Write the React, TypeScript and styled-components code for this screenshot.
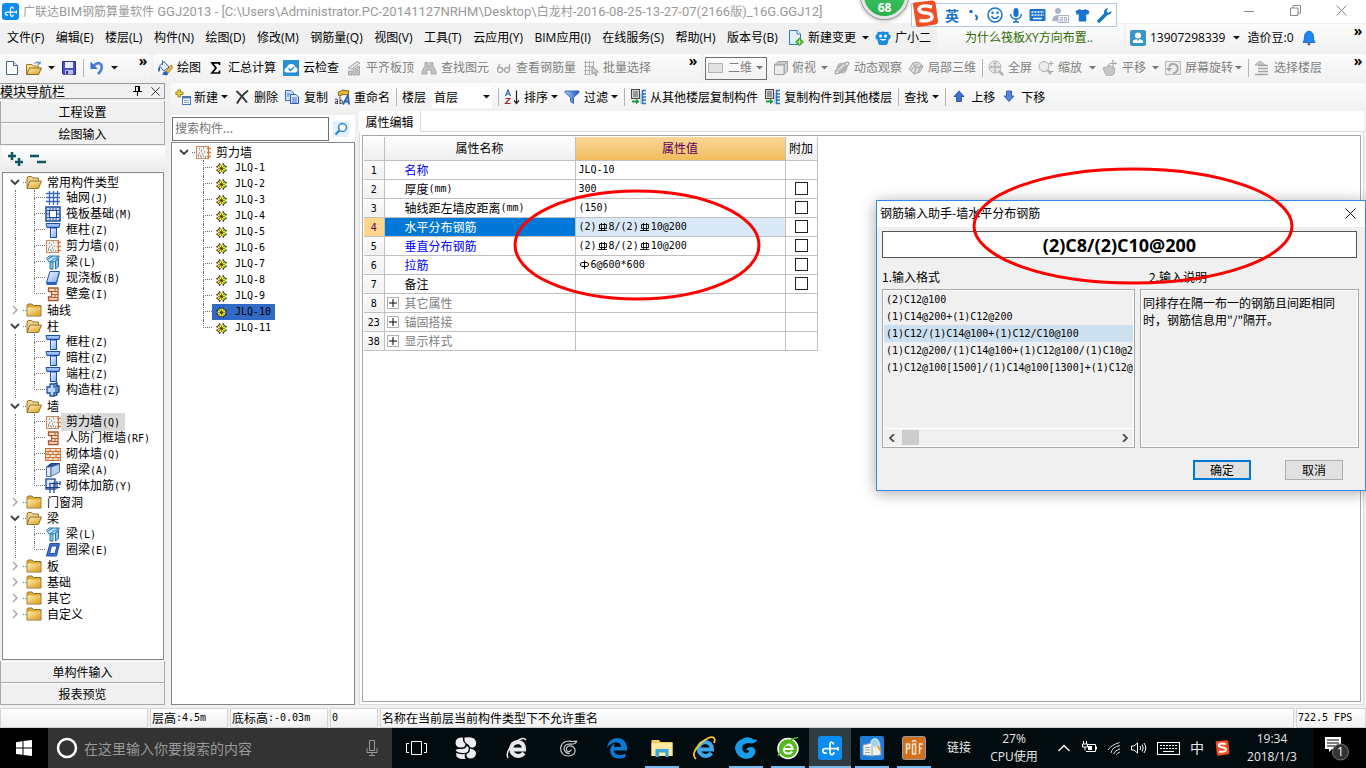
import React from 'react';
import styled, { createGlobalStyle, css } from 'styled-components';

const UI = '"Open Sans", "Noto Sans CJK SC", sans-serif';
const CJK = '"Noto Sans CJK SC", sans-serif';
const MONO = '"DejaVu Sans Mono", monospace';

const Global = createGlobalStyle`
  *, *::before, *::after { box-sizing: border-box; }
  html, body { margin: 0; padding: 0; background: #f0f0f0; }
  body { font: 12px/16px ${UI}; color: #000; }
  button, input, select { font: inherit; color: inherit; margin: 0; padding: 0; border: 0; background: none; border-radius: 0; }
  ul { list-style: none; margin: 0; padding: 0; }
`;

/* ---------- icons ---------- */

const folderClosed = (
  <>
    <path d="M1 4 Q1 2 2.500 2 H6 L7.500 3.500 H15 V14 H1z" fill="#e0a828" stroke="#8a7440" />
    <path d="M1.500 5.500 H14.500 V13.500 H1.500z" fill="url(#gFolder)" />
  </>
);
const column = (
  <>
    <path d="M1 1.500 H15 L14 5.500 H2z" fill="#6fa0e8" stroke="#1c4fa8" />
    <path d="M2 3 H14" stroke="#cfe2ff" />
    <rect x="5.500" y="6" width="6" height="9.500" fill="url(#gBlue)" stroke="#1c4fa8" />
  </>
);
const wall = (
  <>
    <rect x="1.500" y="2.500" width="12" height="12" fill="#f1eeec" stroke="#c98a64" />
    <path d="M13.500 2V15" stroke="#c9713c" />
    <path d="M12 4.500 H16 M12 8.500 H16 M12 12.500 H16" stroke="#d77a36" strokeWidth="1.300" />
    <path d="M4 5h1M8 4h1M6 7h1M9 8h1M4 9h1M7 10h1M3 12h1M5 12h1M8 12h1M10 13h1M6 13h1M3 11h1" stroke="#666" />
  </>
);
const copyLevel = (
  <>
    <rect x="1.500" y=".5" width="8" height="9" fill="#d8d8d8" stroke="#444" />
    <path d="M3 3h5M3 5h5M3 7h5" stroke="#555" />
    <path d="M16 1.500H12.500V14.500H16M12.500 5H16M12.500 8H16M12.500 11H16" stroke="#2a6fc4" fill="none" strokeWidth="1.500" />
    <path d="M11 4V15" stroke="#8ab8ec" />
    <path d="M2 11.500 H6 V9.500 L9.500 12.500 L6 15.500 V13.500 H2z" fill="#1e9a3a" />
  </>
);

const icons: Record<string, React.ReactNode> = {
  app: (
    <>
      <rect width="16" height="16" rx="3" fill="#0a8cf0" />
      <path d="M10.500 5Q10 3.500 9 4Q8 4.300 8 5.500V10.500Q8 12.800 9.500 12.500Q10.500 12.300 10.500 11.300M13.500 7.500V9.500M13.500 8.500H5Q3 8.500 3 10Q3.200 11.600 5.200 11.500" stroke="#fff" strokeWidth="1.200" fill="none" strokeLinecap="round" />
    </>
  ),
  newDoc: (
    <>
      <path d="M2.500 1.500 H9.500 L13.500 5.500 V14.500 H2.500z" fill="#fff" stroke="#4c6484" />
      <path d="M9.500 1.500 V5.500 H13.500" fill="#dce6f4" stroke="#4c6484" />
    </>
  ),
  open: (
    <>
      <path d="M.5 14 V4.500 H6 L7.500 6 H12.500 V8" fill="#f7dc8a" stroke="#9a7a30" />
      <path d="M.5 14.500 L3.500 8 H15.500 L12.500 14.500z" fill="url(#gFolder)" stroke="#8f6c20" />
      <path d="M8.500 3.500 Q11 .5 13.500 3 M14 1 V4 H11" stroke="#476fae" fill="none" />
    </>
  ),
  folderOpen: (
    <>
      <path d="M1 14 V4 Q1 2.500 2.500 2.500 H5.500 L7 4 H12.500 V7" fill="#f3d27c" stroke="#8a7440" />
      <path d="M1 14.500 L4 7 H15.500 L12.500 14.500z" fill="url(#gFolder)" stroke="#8a7440" />
    </>
  ),
  folder: folderClosed,
  save: (
    <>
      <path d="M1.500 1.500 H14.500 V14.500 H2.500 L1.500 13.500z" fill="#4a50c0" stroke="#2b2f8c" />
      <rect x="4" y="2" width="8" height="6" fill="#e8ecfa" />
      <rect x="4" y="10" width="8" height="4.500" fill="#b8bfe6" />
      <rect x="5" y="11" width="2" height="3" fill="#2b2f8c" />
    </>
  ),
  undo: (
    <>
      <path d="M5 5.500 Q9 1.500 12 4.500 Q14.500 8.500 9 14" stroke="#4a80dc" strokeWidth="2.600" fill="none" />
      <path d="M1.500 1.500 V9 H9z" fill="#3a72d0" />
    </>
  ),
  paint: (
    <>
      <path d="M2.500 6 L7 1.500 L12 7 L7 11z" fill="#eaf1fa" stroke="#35618f" />
      <path d="M5.500 .5 V5" stroke="#35618f" />
      <path d="M2 6.500 Q0 10 2 12 Q4 10 2.800 7" fill="#2f5f9c" />
      <path d="M9 11.500 L14 5 L16 7 L11.500 13z" fill="#e7b73e" stroke="#8c6a1c" strokeWidth=".6" />
      <path d="M5 14.500 Q7 10.500 9.500 11.500 Q12.500 14 9.500 15.500z" fill="#2b62b8" />
    </>
  ),
  sigma: <path d="M11.500 5 V2.800 H4 L8 8 L4 13 H11.500 V10.500" fill="none" stroke="#000" strokeWidth="1.700" />,
  cloud: (
    <>
      <rect width="16" height="16" fill="#2a90d4" />
      <path d="M4 12.500 Q1 12.500 1.500 9.500 Q2 7.500 4 7.500 Q5 3.500 8.500 4 Q11.500 4 12 7 Q15 7.500 14.500 10.500 Q14 12.500 12 12.500z" fill="#fff" />
      <path d="M5.500 8.500 L7.500 10.500 L11 7" stroke="#2088d0" strokeWidth="1.500" fill="none" />
    </>
  ),
  slabTop: (
    <>
      <path d="M2 8 L11 1.500 L14 3 L6 9z" fill="#e0e0e0" stroke="#a8a8a8" />
      <path d="M2.500 15 V11 H6 V15z M7 15 V9.500 L10 8 V15z M11 15 V7 L13.500 6 V15z" fill="#c8c8c8" stroke="#a8a8a8" />
    </>
  ),
  binoculars: (
    <path d="M4 2.500 h3 v4 h2 v-4 h3 v3.500 l3 5 v3 h-5 v-4 h-4 v4 h-5 v-3 l3-5z" fill="#c4c4c4" stroke="#9c9c9c" strokeWidth=".8" />
  ),
  glasses: (
    <g fill="none" stroke="#aaa" strokeWidth="1.300">
      <circle cx="4" cy="10" r="2.500" />
      <circle cx="11" cy="10" r="2.500" />
      <path d="M6.500 9.500 H8.500 M1.500 9 L4 4 M13.500 10 V4" />
    </g>
  ),
  batch: (
    <>
      <path d="M1 2.500H11M1 6.500H11M1 10.500H8M1 14.500H8M2.500 1V15M6.500 1V15M10.500 1V8" stroke="#b0b0b0" />
      <path d="M9 6 L15.500 12 H12.500 L14 15 L12.500 15.500 L11 12.500 L9 14z" fill="#d4d4d4" stroke="#999" />
    </>
  ),
  rect2d: <rect x=".5" y="3.500" width="14" height="9" fill="#e2e2e2" stroke="#b4b4b4" />,
  cube: (
    <>
      <path d="M1.500 5 L5 1.500 H14.500 L11 5z" fill="#ccc" stroke="#a0a0a0" />
      <path d="M11 5 L14.500 1.500 V11 L11 14.500z" fill="#d4d4d4" stroke="#a0a0a0" />
      <path d="M1.500 5 H11 V14.500 H1.500z" fill="#ececec" stroke="#a0a0a0" />
    </>
  ),
  planet: (
    <>
      <circle cx="8" cy="8" r="5.500" fill="#bcbcbc" />
      <ellipse cx="8" cy="8" rx="8.500" ry="2.500" transform="rotate(-40 8 8)" fill="none" stroke="#a6a6a6" strokeWidth="1.300" />
      <path d="M4 10 L10 4.500" stroke="#e8e8e8" strokeWidth="1.200" />
    </>
  ),
  local3d: (
    <>
      <path d="M1 9 L5 3 L10 2 L15 6 L12 12 L6 14z" fill="#dcdcdc" stroke="#a6a6a6" />
      <path d="M5 3 L8 8 L6 14 M8 8 L15 6 M3 10 L10 4 M10 13 L13 5" stroke="#a6a6a6" fill="none" />
    </>
  ),
  zoomAll: (
    <>
      <circle cx="7" cy="7" r="6" fill="#ececec" stroke="#adadad" />
      <path d="M7 2.500 V11.500 M2.500 7 H11.500 M5.500 4 L7 2.500 L8.500 4 M5.500 10 L7 11.500 L8.500 10 M4 5.500 L2.500 7 L4 8.500 M10 5.500 L11.500 7 L10 8.500" stroke="#a0a0a0" fill="none" />
      <path d="M11 11 L15 15" stroke="#b0b0b0" strokeWidth="2.500" />
    </>
  ),
  zoomIn: (
    <>
      <circle cx="6" cy="6.500" r="5" fill="#ececec" stroke="#adadad" />
      <path d="M9.500 10 L13 14" stroke="#b0b0b0" strokeWidth="2.500" />
      <path d="M13 1 V6 M10.500 3.500 H15.500 M11 11.500 H15.500" stroke="#a8a8a8" />
    </>
  ),
  pan: (
    <>
      <path d="M1 8 Q3 6 5 8 L6 5 Q8 4 9 7 Q12 6 13 9 L12 14 L9 16 H5 L3 13z" fill="#c6c6c6" stroke="#b0b0b0" />
      <path d="M11 0 V8 M7.500 3.500 H14.500 M10 1.500 L11 .5 L12 1.500 M13.500 2.500 L14.500 3.500 L13.500 4.500" stroke="#a0a0a0" fill="none" />
    </>
  ),
  rotate: (
    <>
      <rect x=".5" y="1.500" width="15" height="13" fill="#ececec" stroke="#bbb" />
      <path d="M4 7 A4.500 4.500 0 1 1 8 13" fill="none" stroke="#a4a4a4" strokeWidth="1.800" />
      <path d="M1 8 L4 11.500 L7 8z" fill="#a4a4a4" />
    </>
  ),
  floors: (
    <>
      <path d="M1 5 L6 1 L11 5z" fill="#ccc" stroke="#aaa" />
      <path d="M4 5.500H14M4 8.500H14M4 11.500H14M1 14.500H14" stroke="#a4a4a4" strokeWidth="1.500" />
    </>
  ),
  newComp: (
    <>
      <rect x="7.500" y="7.500" width="8" height="8" fill="#fff" stroke="#4a76c0" />
      <path d="M7 8.500H16" stroke="#4a76c0" strokeWidth="2" />
      <path d="M9 11.500h5M9 13.500h5" stroke="#7b9bd0" />
      <path d="M3 .8 H5.500 V3 H8 V5.500 H5.500 V8 H3 V5.500 H.8 V3 H3z" fill="#f2cf2f" stroke="#8b7418" strokeWidth=".8" />
    </>
  ),
  del: <path d="M2.500 2 Q8 7 13 13.500 M14 1.500 Q7 7 3 14.500" stroke="#3c3c3c" strokeWidth="2" fill="none" />,
  copy: (
    <>
      <path d="M1.500 1.500 H7 L9.500 4 V11.500 H1.500z" fill="#cfe0fa" stroke="#3e6cb8" />
      <path d="M6.500 5.500 H12 L14.500 8 V14.500 H6.500z" fill="#dbe8fc" stroke="#2c5aa8" />
      <path d="M8 9h5M8 11h5M8 13h5M3 5h3M3 7h2" stroke="#3e6cb8" />
    </>
  ),
  rename: (
    <>
      <path d="M4 3.500 L9 1 L15 2 L14 6 L9 5.500 L5 7z" fill="#e6b93c" stroke="#7b6320" />
      <path d="M9 15.500 L14 6.500 L15 15.500 M11 12.500H15" stroke="#2660c0" strokeWidth="1.800" fill="none" />
      <path d="M1 10.500 Q3.500 9 3.500 11.500 V15 M3.500 12.500 Q.5 12 1 14 Q2 15.500 3.500 14 M6 7.500V15 M6 11.500 Q8.500 10 8.500 13 Q8 15.500 6 14.500" stroke="#444" fill="none" />
    </>
  ),
  sort: (
    <>
      <path d="M1.500 7 L4 .8 L6.500 7 M2.500 5H5.500" stroke="#2f5fb8" strokeWidth="1.200" fill="none" />
      <path d="M1.500 9.500H6L1.500 14.500H6.500" stroke="#a02c2c" strokeWidth="1.200" fill="none" />
      <path d="M12.500 1.500V13.500M10 11.500L12.500 14.500L15 11.500" stroke="#222" strokeWidth="1.200" fill="none" />
    </>
  ),
  filter: <path d="M1 2 H15 V3.500 L9.500 8.500 V14.500 L6.500 12.500 V8.500 L1 3.500z" fill="url(#gBlueDeep)" stroke="#2456b0" strokeWidth=".8" />,
  copyLevel,
  up: <path d="M8 2 L13 7.500 H10.500 V12.500 H5.500 V7.500 H3z" fill="#3c72d8" stroke="#1d3f90" strokeWidth=".8" />,
  down: <path d="M8 12.500 L13 7 H10.500 V2 H5.500 V7 H3z" fill="#5484e0" stroke="#274ea4" strokeWidth=".8" />,
  change: (
    <>
      <path d="M1.500 .5 H9 L12.500 4 V14.500 H1.500z" fill="#dff0fc" stroke="#2b7cb8" />
      <path d="M9 .5V4H12.500" fill="#fff" stroke="#2b7cb8" />
      <path d="M11.500 7.500 L16 12 L11.500 16 L7 12z" fill="#3ba32a" />
      <path d="M11.500 9.500V14.500M9 12H14" stroke="#b8f08a" />
    </>
  ),
  mascot: (
    <>
      <path d="M2.500 4 Q1.500 1 5 2 Q8 1 11 2 Q14.500 1 13.500 4 Q16.500 5 15.500 7.500 Q15 9.500 13.500 9.500 Q13.500 13 11.500 15 H4.500 Q2.500 13 2.500 9.500 Q.5 9.500 .5 7 Q0 5 2.500 4" fill="#1b8be0" />
      <circle cx="5.500" cy="6" r="1.500" fill="#fff" />
      <circle cx="10.500" cy="6" r="1.500" fill="#fff" />
      <path d="M4.500 9 Q8 12.500 11.500 9z" fill="#fff" />
    </>
  ),
  user: (
    <>
      <rect width="16" height="16" rx="2" fill="#3b96c8" />
      <circle cx="8" cy="5.500" r="3" fill="#fff" />
      <path d="M3 13 V10.500 Q5 9.500 6.500 9 L8 11 L9.500 9 Q11 9.500 13 10.500 V13z" fill="#fff" />
    </>
  ),
  bell: (
    <>
      <path d="M8 1 Q12.500 2 12.500 7 Q12.500 10 14 12.500 H2 Q3.500 10 3.500 7 Q3.500 2 8 1z" fill="#1c86f2" stroke="#1263c0" strokeWidth=".8" />
      <path d="M6 13.500 H10 L8 15.500z" fill="#222" />
    </>
  ),
  grid: <path d="M4.500 1V15M8.500 1V15M12.500 1V15M1 3.500H15M1 7.500H15M1 11.500H15" stroke="#3a68c0" strokeWidth="1.300" />,
  raft: (
    <>
      <rect x="1" y="1" width="14" height="14" fill="#cfe2f8" stroke="#1b4a98" strokeWidth="1.500" />
      <rect x="4.500" y="4.500" width="7" height="7" fill="#fff" stroke="#1b4a98" />
      <path d="M2 4.500H4M2 8H4M2 11.500H4M12 4.500H14M12 8H14M12 11.500H14M5 2V4M8 2V4M11 2V4M5 12V14M8 12V14M11 12V14" stroke="#1b4a98" />
    </>
  ),
  column,
  wall,
  beam: (
    <>
      <path d="M1.500 4.500 L4 2 H14.500 L12 5.500 L9 8 H4z" fill="#bfe2f6" stroke="#2276b4" />
      <path d="M5 8 H8 V15 H5z M10.500 7 L13.500 4.500 V12.500 L10.500 15z" fill="#8cc6ec" stroke="#2276b4" />
      <path d="M3 5 L8 2 M6 7 L13 2.500" stroke="#2276b4" />
    </>
  ),
  slab: (
    <>
      <path d="M5 1.500 H14.500 L11.500 12.500 H1.500z" fill="url(#gBlue)" stroke="#1c4fa8" />
      <path d="M1.500 12.500 V15 H11.500 L14.500 4 V1.500 L11.500 12.500z" fill="#2c62c4" />
    </>
  ),
  niche: (
    <>
      <path d="M3.500 2 H13 V14.500 H3.500 V11 H6.500 V5.500 H3.500z" fill="#fbe4cc" stroke="#b0552a" strokeWidth="1.300" />
      <path d="M7 5.500H12.500M7 8.500H12.500M7 11.500H12.500M10 2.500V5M10 9V11" stroke="#b0552a" />
    </>
  ),
  structCol: (
    <>
      <path d="M5 2 H9 V5 H11 V11 H9 V14 H5 V11 H2 V5 H5z" fill="#bcd6f8" stroke="#1c4fa8" strokeWidth="1.300" />
      <path d="M9 2 L12 1 V4 L14 4 V10 L11 11 M9 14 L12 13 V10.500" fill="#5c8ad8" stroke="#17408c" strokeWidth="1.300" />
    </>
  ),
  brick: (
    <>
      <rect x=".5" y="2.500" width="15" height="12" fill="#fbe3cc" stroke="#c4713c" />
      <path d="M1 5.500H15M1 8.500H15M1 11.500H15M5 3V5M11 3V5M8 6V8M3 6V8M13 6V8M5 9V11M11 9V11M8 12V14M3 12V14M13 12V14" stroke="#c4713c" />
    </>
  ),
  hiddenBeam: (
    <>
      <path d="M1.500 5 L6 1.500 H14.500 L9 5z" fill="#274e90" stroke="#1d3d78" />
      <path d="M1.500 5 H6 V14.500 H1.500z" fill="#dfeafa" stroke="#4c6ea8" />
      <path d="M6 5 L14.500 2 V10 L6 14.500z" fill="#b9cfee" stroke="#4c6ea8" />
    </>
  ),
  brickBar: (
    <>
      <rect x="1" y="1" width="9" height="10" fill="#dbe8fb" stroke="#1b3f98" strokeWidth="1.300" />
      <path d="M1 9.500H15M4 5.500H15M5 5V15M9 4V15M12 3V11M15 3V7" stroke="#1b3f98" strokeWidth="1.200" />
    </>
  ),
  ringBeam: (
    <>
      <path d="M5 1.500 H14.500 L11.500 14 H1.500z" fill="#3a74d4" stroke="#1c4fa8" />
      <path d="M6.500 4 H12 L10 11.500 H4.500z" fill="#fff" stroke="#1c4fa8" />
    </>
  ),
  gear: (
    <>
      <path d="M5.500 .5V15.500M10.500 .5V15.500M.5 5.500H15.500M.5 10.500H15.500M3 3L13 13M13 3L3 13" stroke="#333" strokeWidth="2" />
      <circle cx="8" cy="8" r="5.500" fill="#f2e22a" />
      <circle cx="8" cy="8" r="2" fill="#222" />
      <path d="M8 3V13M3 8H13M4.500 4.500L11.500 11.500M11.500 4.500L4.500 11.500" stroke="#55500c" strokeWidth=".8" />
    </>
  ),
  expandAll: (
    <path d="M1 5H9M5 1V9M8 11H16M12 7V15" stroke="#0d5a5e" strokeWidth="2.500" />
  ),
  collapseAll: <path d="M0 5H9M7 11H16" stroke="#0d5a5e" strokeWidth="2.500" />,
  search: (
    <>
      <rect width="16" height="16" fill="#e2f1fb" />
      <circle cx="9.500" cy="6.500" r="4" fill="#fff" stroke="#2d86cc" strokeWidth="1.500" />
      <path d="M6.500 9.500 L2.500 13.500" stroke="#2d86cc" strokeWidth="2.200" />
    </>
  ),
};

const Svg = styled.svg`
  flex: none;
  display: block;
`;

function Icon({ name, size = 16 }: { name: string; size?: number }) {
  return (
    <Svg width={size} height={size} viewBox="0 0 16 16" aria-hidden="true">
      {icons[name]}
    </Svg>
  );
}

const HiddenDefs = styled.svg`
  position: absolute;
`;
function Gradients() {
  return (
    <HiddenDefs width="0" height="0" aria-hidden="true">
      <defs>
        <linearGradient id="gFolder" x1="0" y1="0" x2="1" y2="1">
          <stop offset="0" stopColor="#fff0b0" />
          <stop offset="1" stopColor="#dd9a1c" />
        </linearGradient>
        <linearGradient id="gBlue" x1="0" y1="0" x2="1" y2="1">
          <stop offset="0" stopColor="#f4f9ff" />
          <stop offset="1" stopColor="#7eaaf0" />
        </linearGradient>
        <linearGradient id="gBlueDeep" x1="0" y1="0" x2="1" y2="0">
          <stop offset="0" stopColor="#a8ccff" />
          <stop offset="1" stopColor="#1c54c0" />
        </linearGradient>
      </defs>
    </HiddenDefs>
  );
}

const ArrowSvg = styled.svg<{ $gap: number }>`
  flex: none;
  margin-left: ${(p) => p.$gap}px;
`;
function Arrow({ gap = 0, color = '#111' }: { gap?: number; color?: string }) {
  return (
    <ArrowSvg $gap={gap} width="7" height="4" viewBox="0 0 7 4" aria-hidden="true">
      <path d="M0 0H7L3.500 3.500z" fill={color} />
    </ArrowSvg>
  );
}

const splitRuns = (text: string) => text.match(/[\x20-\x7e]+|[^\x20-\x7e]+/g) || [];
const isLatin = (run: string) => /^[\x20-\x7e]/.test(run);

/* Half-width Latin runs are set in a 6px-advance face, next to 12px Chinese. */
const MonoRun = styled.span`
  font: 10px/16px ${MONO};
`;
function Song({ children }: { children: string }) {
  return (
    <>
      {splitRuns(children).map((r, i) => (isLatin(r) ? <MonoRun key={i}>{r}</MonoRun> : <span key={i}>{r}</span>))}
    </>
  );
}

/* ---------- frame ---------- */

const Page = styled.div`
  position: relative;
  display: flex;
  flex-direction: column;
  min-height: 100vh;
  overflow: hidden;
`;
const TitleBar = styled.header`
  display: flex;
  align-items: center;
  height: 23px;
  padding: 0 18px 0 2px;
  background: #fff;
  color: #999;
  gap: 4px;
  white-space: pre;
`;
const TitleText = styled.h1`
  flex: 1;
  margin: 0;
  font: 12px/16px ${CJK};
`;
const TitleLatin = styled.span`
  font: 13px/16px Roboto, sans-serif;
`;
const WinButtons = styled.div`
  display: flex;
  gap: 34px;
  padding-bottom: 2px;
  button { display: flex; width: 12px; height: 12px; }
`;

const Bar = styled.div`
  display: flex;
  align-items: center;
  gap: 2px;
  height: 30px;
  white-space: nowrap;
`;
const Strip = styled.div<{ $grow?: boolean; $pad?: number; $gap?: number; $w?: number }>`
  display: flex;
  align-items: center;
  gap: ${(p) => p.$gap ?? 7}px;
  height: 28px;
  padding: 0 2px 0 ${(p) => p.$pad ?? 4}px;
  border-radius: 3px;
  background: linear-gradient(#fcfcfc, #f1f1f1);
  ${(p) => p.$grow && css`flex: 1;`}
  ${(p) => p.$w && css`flex: none; width: ${p.$w}px;`}
`;
const MenuArea = styled.div`
  display: flex;
  align-items: center;
  flex: none;
  gap: 6px;
  width: 935px;
`;
const Menu = styled.nav`
  display: flex;
  align-items: center;
  justify-content: space-between;
  flex: none;
  width: 782px;
  padding: 0 4px 0 7px;
`;
const Tool = styled.button<{ $dim?: boolean; $gap?: number }>`
  display: flex;
  align-items: center;
  flex: none;
  gap: ${(p) => p.$gap ?? 4}px;
  color: ${(p) => (p.$dim ? '#808080' : '#000')};
  white-space: nowrap;
`;
const Sep = styled.i`
  flex: none;
  width: 1px;
  height: 18px;
  margin: 0 -1px 0 0;
  background: #b4b4b4;
`;
const Push = styled.i`
  flex: 1;
`;
const More = styled.button`
  align-self: flex-start;
  width: 12px;
  font: bold 14px/14px ${UI};
`;
const Promo = styled.a`
  color: #2f6a00;
  text-decoration: none;
`;
const ViewPick = styled.label`
  display: flex;
  align-items: center;
  gap: 4px;
  width: 62px;
  height: 23px;
  padding: 0 4px 0 2px;
  border: 1px solid #707070;
  color: #808080;
`;
const Select = styled.select`
  flex: 1;
  width: 24px;
  appearance: none;
  outline: none;
`;
const FloorPick = styled.label`
  display: flex;
  align-items: center;
  gap: 6px;
`;
const FloorBox = styled.span`
  display: flex;
  align-items: center;
  width: 60px;
  height: 22px;
  padding: 0 2px;
  background: #fff;
`;

const Work = styled.div`
  display: flex;
  flex: 1;
  gap: 6px;
  font-family: ${CJK};
`;
const Side = styled.aside`
  display: flex;
  flex-direction: column;
  flex: none;
  width: 165px;
  padding-bottom: 3px;
`;
const SideHead = styled.div`
  display: flex;
  align-items: center;
  gap: 9px;
  height: 16px;
  padding-right: 4px;
  border: 1px solid #9a9a9a;
  border-left: 0;
  margin-bottom: 2px;
  font-size: 13px;
  line-height: 14px;
  span { flex: 1; }
  button { display: flex; }
`;
const Section = styled.button`
  height: 22px;
  border: 1px solid #a8a8a8;
  border-width: 0 1px 1px;
  box-shadow: inset 0 1px #fff;
`;
const SideTools = styled.div`
  display: flex;
  align-items: center;
  gap: 7px;
  height: 25px;
  margin: 1px 0 1px 2px;
  padding-left: 5px;
  background: linear-gradient(#fff, #ececec);
`;
const TreeBox = styled.div<{ $last?: boolean }>`
  flex: 1;
  margin: ${(p) => (p.$last ? '0' : '0 1px 1px 2px')};
  padding-top: 1px;
  border: 1px solid #828790;
  background: #fff;
`;
const Row = styled.li`
  display: flex;
  align-items: center;
  height: 16px;
  white-space: nowrap;
`;
const Twist = styled.button`
  display: flex;
  justify-content: center;
  width: 11px;
  margin-left: 6px;
`;
const Dash = styled.i`
  width: 3px;
  margin-left: 3px;
  border-top: 1px dotted #777;
`;
const Trunk = styled.i`
  flex: none;
  width: 19px;
  height: 16px;
  margin-left: 12px;
  border-left: 1px dotted #777;
`;
const Branch = styled.i<{ $last?: boolean; $ml?: number; $w?: number }>`
  flex: none;
  width: ${(p) => p.$w || 11}px;
  height: 16px;
  margin-left: ${(p) => p.$ml || 0}px;
  &::before, &::after { content: ''; display: block; height: 8px; border-left: 1px dotted #777; }
  &::before { border-bottom: 1px dotted #777; }
  &::after { ${(p) => p.$last && css`border-left: 0;`} }
`;
const Label = styled.span<{ $selected?: boolean }>`
  padding: 0 5px;
  ${(p) => p.$selected && css`background: #d9d9d9;`}
`;
const PickRow = styled.span<{ $on?: boolean }>`
  display: flex;
  align-items: center;
  height: 16px;
  padding: 0 4px;
  gap: 8px;
  ${(p) => p.$on && css`background: #316ac5;`}
`;

const Main = styled.main`
  display: flex;
  flex-direction: column;
  flex: 1;
  min-width: 0;
`;
const Panels = styled.div`
  display: flex;
  flex: 1;
  gap: 4px;
`;
const Comps = styled.section`
  display: flex;
  flex-direction: column;
  flex: none;
  width: 184px;
  padding: 4px 0 3px;
`;
const SearchRow = styled.form`
  display: flex;
  align-items: center;
  gap: 4px;
  height: 27px;
  padding: 1px 0 1px 1px;
  background: #fff;
  button { display: flex; }
`;
const SearchInput = styled.input`
  width: 157px;
  height: 24px;
  padding: 0 2px 2px;
  border: 1px solid #6f6f6f;
  background: #fff;
  outline: none;
  &::placeholder { color: #757575; opacity: 1; }
`;
const Props = styled.section`
  display: flex;
  flex-direction: column;
  flex: 1;
  min-width: 0;
  padding: 0 2px 3px 0;
`;
const Tabs = styled.div`
  display: flex;
  height: 21px;
  background: #fff;
`;
const Tab = styled.button`
  width: 62px;
  border-right: 1px solid #dcdcdc;
  text-align: center;
`;
const TabRest = styled.i`
  flex: 1;
  border-bottom: 1px solid #dcdcdc;
`;
const Sheet = styled.div`
  flex: 1;
  padding: 3px 2px 2px;
  border: 1px solid #dcdcdc;
  border-top: 0;
  background: #fff;
`;
const SheetInner = styled.div`
  height: 100%;
  padding: 1px;
  border: 1px solid #a6a6a6;
`;

const Table = styled.table`
  width: 453px;
  table-layout: fixed;
  border-collapse: collapse;
  td, th { height: 19px; padding: 0; border: 1px solid #c0c0c0; font-weight: normal; line-height: 16px; }
  thead th { height: 23px; border-top: 0; background: linear-gradient(#fdfdfd, #efefef); }
  tr > :first-child { border-left: 0; }
`;
const ValueHead = styled.th`
  && { background: linear-gradient(#f9d698, #efbd5c); color: #5c0060; }
`;
const NumCell = styled.th<{ $on?: boolean }>`
  background: ${(p) => (p.$on ? '#ffd58c' : 'linear-gradient(#fbfbfb, #f0f0f0)')};
  color: ${(p) => (p.$on ? '#5c0060' : '#000')};
`;
const NameCell = styled.td<{ $on?: boolean; $c?: string }>`
  color: ${(p) => (p.$on ? '#fff' : p.$c || '#000')};
  background: ${(p) => (p.$on ? '#0078d7' : '#fff')};
  > div { display: flex; align-items: center; padding-left: 2px; }
`;
const Plus = styled.button`
  display: flex;
  flex: none;
  align-items: center;
  justify-content: center;
  width: 12px;
  height: 12px;
  margin-right: 6px;
  border: 1px solid #b0b0b0;
`;
const Indent = styled.i`
  width: 18px;
`;
const ValCell = styled.td<{ $on?: boolean }>`
  background: ${(p) => (p.$on ? '#d9e9f8' : '#fff')};
  > div { display: flex; align-items: center; padding-left: 3px; height: 16px; }
`;
const CheckCell = styled.td`
  text-align: center;
  input { display: block; margin: 0 auto; width: 13px; height: 13px; appearance: none; border: 1px solid #222; background: #fff; }
`;

/* ---------- dialog ---------- */

const Dialog = styled.section`
  position: absolute;
  left: 876px;
  top: 200px;
  width: 490px;
  border: 1px solid #2e8ae6;
  background: #f0f0f0;
  box-shadow: 0 2px 14px rgba(0, 0, 0, .35);
  font-family: ${CJK};
  padding-bottom: 10px;
`;
const DialogHead = styled.div`
  display: flex;
  align-items: center;
  justify-content: space-between;
  height: 26px;
  padding: 0 9px 2px 3px;
  background: #fff;
  button { display: flex; }
`;
const Formula = styled.input`
  display: block;
  width: calc(100% - 13px);
  height: 27px;
  margin: 4px 8px 11px 5px;
  border: 1px solid #555;
  background: #fff;
  text-align: center;
  font: bold 18px/22px "Open Sans", sans-serif;
  outline: none;
`;
const Cols = styled.div`
  display: grid;
  grid-template-columns: 253px 1fr;
  gap: 4px 5px;
  padding: 0 6px 0 5px;
`;
const ColTitle = styled.h2<{ $pad?: boolean }>`
  margin: 0;
  padding-left: ${(p) => (p.$pad ? 9 : 0)}px;
  font: 12px/16px ${CJK};
`;
const Well = styled.div`
  display: flex;
  flex-direction: column;
  height: 159px;
  padding: 1px;
  border: 1px solid #a8a8a8;
  box-shadow: inset 0 0 0 1px #fff;
`;
const Formats = styled.ul`
  flex: 1;
  li { height: 17px; padding-left: 2px; font: 10px/17px ${MONO}; white-space: nowrap; }
  li[aria-selected='true'] { background: #cce0ef; }
`;
const HScroll = styled.div`
  display: flex;
  align-items: center;
  height: 18px;
  padding: 0 4px;
  border-top: 1px solid #fff;
`;
const Thumb = styled.i`
  width: 17px;
  height: 15px;
  margin-left: 6px;
  margin-right: auto;
  background: #cdcdcd;
`;
const Hint = styled.p`
  margin: 3px 1px;
  font: 12px/17px ${CJK};
`;
const Actions = styled.div`
  display: flex;
  justify-content: flex-end;
  gap: 34px;
  padding: 12px 22px 0 0;
`;
const DialogButton = styled.button<{ $main?: boolean }>`
  width: 58px;
  height: 20px;
  border: ${(p) => (p.$main ? '2px solid #0078d7' : '1px solid #adadad')};
  background: #e1e1e1;
  line-height: 16px;
`;

const Marks = styled.svg`
  position: absolute;
  left: 0;
  top: 0;
  pointer-events: none;
`;

const Badge = styled.div`
  position: absolute;
  left: 861px;
  top: -28px;
  display: flex;
  align-items: flex-end;
  justify-content: center;
  width: 47px;
  height: 47px;
  border: 3px solid #e4e4e4;
  border-radius: 50%;
  background: linear-gradient(#4ed070, #27b04c);
  box-shadow: 0 0 0 1px #9a9a9a, 0 1px 5px rgba(0, 0, 0, .4);
  color: #fff;
  font-weight: bold;
`;
const Ime = styled.div`
  position: absolute;
  left: 911px;
  top: 3px;
  display: flex;
  align-items: center;
  gap: 6px;
  height: 24px;
  width: 206px;
  border: 1px solid #b8c8e0;
  background: #fff;
  padding-left: 33px;
  color: #1874cc;
  font: bold 14px/20px ${CJK};
`;
const ImeLogo = styled.svg`
  position: absolute;
  left: -1px;
  top: -4px;
`;

/* ---------- status & taskbar ---------- */

const Status = styled.footer`
  display: flex;
  gap: 2px;
  height: 20px;
  font-family: ${CJK};
`;
const Cell = styled.div<{ $w?: number }>`
  display: flex;
  align-items: center;
  padding: 0 1px;
  border: 1px solid #d4d4d4;
  background: linear-gradient(#fff, #f0f0f0);
  white-space: pre;
  ${(p) => (p.$w ? css`flex: none; width: ${p.$w}px;` : css`flex: 1;`)}
`;
const Taskbar = styled.nav`
  display: flex;
  height: 40px;
  background: #020b0e;
  color: #e8e8e8;
`;
const TaskCell = styled.button<{ $w: number; $run?: boolean; $on?: boolean }>`
  position: relative;
  display: flex;
  flex: none;
  align-items: center;
  justify-content: center;
  width: ${(p) => p.$w}px;
  background: ${(p) => (p.$on ? '#2f3c40' : 'transparent')};
  ${(p) => (p.$run || p.$on) && css`
    &::after { content: ''; position: absolute; left: ${p.$on ? 0 : 4}px; right: ${p.$on ? 0 : 4}px; bottom: 0; height: 2px; background: #76b9ed; }`}
`;
const StartCell = styled(TaskCell)`
  background: #000;
`;
const TaskSearch = styled.label`
  display: flex;
  align-items: center;
  flex: none;
  gap: 6px;
  width: 344px;
  padding: 0 14px 0 8px;
  background: #333;
  input { flex: 1; font: 14px/20px ${CJK}; outline: none; }
  input::placeholder { color: #999; opacity: 1; }
`;
const TaskApps = styled.div`
  display: flex;
  flex: 1;
`;
const Tray = styled.div`
  display: flex;
  align-items: center;
  flex: none;
  gap: 10px;
`;
const TrayText = styled.div<{ $w: number; $big?: boolean }>`
  width: ${(p) => p.$w}px;
  text-align: center;
  font: ${(p) => (p.$big ? 14 : 12)}px/18px ${UI};
  white-space: nowrap;
`;
const Notice = styled.div`
  display: flex;
  align-items: center;
  width: 52px;
  height: 40px;
  padding-left: 10px;
  background: #000;
`;

/* ---------- data ---------- */

const title = '广联达BIM钢筋算量软件 GGJ2013 - [C:\\Users\\Administrator.PC-20141127NRHM\\Desktop\\白龙村-2016-08-25-13-27-07(2166版)_16G.GGJ12]';

const menus = ['文件(F)', '编辑(E)', '楼层(L)', '构件(N)', '绘图(D)', '修改(M)', '钢筋量(Q)', '视图(V)', '工具(T)', '云应用(Y)', 'BIM应用(I)', '在线服务(S)', '帮助(H)', '版本号(B)'];

type Group = { name: string; open?: boolean; items?: [string, string, boolean?][] };
const groups: Group[] = [
  { name: '常用构件类型', open: true, items: [['grid', '轴网(J)'], ['raft', '筏板基础(M)'], ['column', '框柱(Z)'], ['wall', '剪力墙(Q)'], ['beam', '梁(L)'], ['slab', '现浇板(B)'], ['niche', '壁龛(I)']] },
  { name: '轴线' },
  { name: '柱', open: true, items: [['column', '框柱(Z)'], ['column', '暗柱(Z)'], ['column', '端柱(Z)'], ['structCol', '构造柱(Z)']] },
  { name: '墙', open: true, items: [['wall', '剪力墙(Q)', true], ['niche', '人防门框墙(RF)'], ['brick', '砌体墙(Q)'], ['hiddenBeam', '暗梁(A)'], ['brickBar', '砌体加筋(Y)']] },
  { name: '门窗洞' },
  { name: '梁', open: true, items: [['beam', '梁(L)'], ['ringBeam', '圈梁(E)']] },
  { name: '板' },
  { name: '基础' },
  { name: '其它' },
  { name: '自定义' },
];

type PropRow = { n: string; name: string; value?: string; color?: string; check?: boolean; on?: boolean; plus?: boolean };
const rows: PropRow[] = [
  { n: '1', name: '名称', value: 'JLQ-10', color: '#0000ff' },
  { n: '2', name: '厚度(mm)', value: '300', check: true },
  { n: '3', name: '轴线距左墙皮距离(mm)', value: '(150)', check: true },
  { n: '4', name: '水平分布钢筋', value: '(2)ǂ8/(2)ǂ10@200', check: true, on: true },
  { n: '5', name: '垂直分布钢筋', value: '(2)ǂ8/(2)ǂ10@200', color: '#0000ff', check: true },
  { n: '6', name: '拉筋', value: 'ф6@600*600', color: '#0000ff', check: true },
  { n: '7', name: '备注', check: true },
  { n: '8', name: '其它属性', color: '#808080', plus: true },
  { n: '23', name: '锚固搭接', color: '#808080', plus: true },
  { n: '38', name: '显示样式', color: '#808080', plus: true },
];

const formats = [
  '(2)C12@100',
  '(1)C14@200+(1)C12@200',
  '(1)C12/(1)C14@100+(1)C12/C10@100',
  '(1)C12@200/(1)C14@100+(1)C12@100/(1)C10@2',
  '(1)C12@100[1500]/(1)C14@100[1300]+(1)C12@',
];

/* Reinforcement grade mark: one bar for plain steel, extra bars for ribbed. */
function Grade({ ribbed }: { ribbed: boolean }) {
  return (
    <Svg width="12" height="12" viewBox="0 0 12 12" role="img" aria-label={ribbed ? 'HRB400' : 'HPB300'}>
      <path
        d={ribbed ? 'M2.500 3.500H9.500V7.500H2.500z M4.500 2V10 M7.500 2V10 M1 9.500H10' : 'M3 3.500H8L9.500 4.500V6.500L8 7.500H3L1.500 6.500V4.500z M5.500 1.500V10'}
        fill="none"
        stroke="#000"
        strokeWidth={ribbed ? 0.9 : 1}
      />
    </Svg>
  );
}
function Value({ text }: { text: string }) {
  return (
    <div>
      {text.split(/([ǂф])/).map((part, i) =>
        part === 'ǂ' || part === 'ф' ? <Grade key={i} ribbed={part === 'ǂ'} /> : <Song key={i}>{part}</Song>,
      )}
    </div>
  );
}

function Chevron({ open }: { open?: boolean }) {
  return (
    <Svg width="10" height="10" viewBox="0 0 10 10" aria-hidden="true">
      <path d={open ? 'M1 3L5 7L9 3' : 'M3 1L7 5L3 9'} fill="none" stroke={open ? '#404040' : '#a0a0a0'} strokeWidth={open ? 1.8 : 1.3} />
    </Svg>
  );
}

function Cross({ size = 11, color = '#111' }: { size?: number; color?: string }) {
  return (
    <Svg width={size} height={size} viewBox="0 0 11 11" aria-hidden="true">
      <path d="M.5 .5L10.500 10.500M10.500 .5L.5 10.500" stroke={color} fill="none" />
    </Svg>
  );
}

function T({ icon, text, dim, arrow, gap }: { icon: string; text: string; dim?: boolean; arrow?: number; gap?: number }) {
  return (
    <Tool $dim={dim} $gap={gap}>
      <Icon name={icon} />
      {text}
      {arrow !== undefined && <Arrow gap={arrow} color={dim ? '#777' : '#111'} />}
    </Tool>
  );
}

function SLogo({ size }: { size: number }) {
  return (
    <Svg width={size} height={size} viewBox="0 0 28 28" aria-hidden="true">
      <path d="M3 4 Q2 2 4.500 2 L22 .5 Q24.500 .5 25 3 L27 22 Q27 24.500 24.500 25 L8 27.500 Q5.500 27.500 5 25z" fill="#f04e23" />
      <path d="M20.500 7 Q10 4.500 8.500 9 Q8 12.500 15 13 Q21.500 13.500 21 17.500 Q19.500 22 8.500 20" stroke="#fff" strokeWidth="3.500" fill="none" />
    </Svg>
  );
}

function TaskIcon({ kind }: { kind: string }) {
  const art: Record<string, React.ReactNode> = {
    view: <path d="M7.500 5.500H17.500V18.500H7.500z M5 7.500H2.500V16.500H5 M20 7.500H22.500V16.500H20" fill="none" stroke="#fff" />,
    fan: (
      <g fill="#eee">
        <path d="M9 1.500 Q1.500 1 1.500 7 Q2 12 8 11.500 Q11 11.500 11.500 8 Q8.500 6 9 1.500z" />
        <path d="M10.500 1.500 Q16 .5 20 2.500 Q23.500 6 21.500 10 Q19 13 16 11 Q15 8 12.500 7.500 Q10 6 10.500 1.500z" />
        <path d="M1.500 14 Q3 12.500 8 13 Q12 13 12.500 10 Q15.500 11 14.500 14 Q14 17 10 17 Q3.500 17.500 1.500 14z" />
        <path d="M16 12.500 Q22 13.500 22 17.500 Q21.500 22.500 16 22.500 Q12 22 12.500 18 Q16 17 16 12.500z" />
        <path d="M2 17 Q5 18.500 11 18 Q10 22 12 23 Q5 23.500 2.500 20.500z" />
      </g>
    ),
    e1: (
      <>
        <path d="M7 13.500H19Q19 6.500 13 6Q6.500 6.500 6 13Q7 19.500 13 20Q16.500 20 19 17" fill="none" stroke="#e8e8e8" strokeWidth="4" />
        <path d="M3 22 Q0 16 9 7 Q18 0 21 4" fill="none" stroke="#e8e8e8" strokeWidth="1.500" />
      </>
    ),
    swirl: (
      <path d="M21 5 Q16 6 13 5 Q6 5 4.500 12 Q5 20 12.500 20 Q20 19 19 13.500 Q17 9 12.500 10 Q9 12 11 15 Q14 16.500 15.500 13.500 M21 5 Q19 9 13 8 Q8 8.500 8 13 Q9 17.500 14 17.500" fill="none" stroke="#ccc" strokeWidth="1.200" />
    ),
    edge: (
      <path d="M2 12 Q3 2.500 12.500 2 Q21.500 2.500 22 12 V14.500 H9 Q9.500 18.500 14 19 Q18 19 20.500 17.500 V21 Q17 22.800 13 22.500 Q5.500 21.500 5 14.500 Q5.500 9.500 10 7.500 Q9 9 9 11 H16 Q16 6.500 11.500 6.500 Q5.500 6.500 2 12z" fill="#0a78d4" />
    ),
    explorer: (
      <>
        <path d="M1.500 4H9L10.500 6H22.500V20H1.500z" fill="#f5cd5c" />
        <path d="M1.500 7H22.500V20H1.500z" fill="#ffe9a2" />
        <path d="M5.500 21V13H18.500V21H15.500V16.500H9V21z" fill="#37a6e0" />
      </>
    ),
    ie: (
      <>
        <path d="M7 13.500H20Q20 7 13.500 6Q7 6.500 6.500 13Q7.500 19.500 13.500 20Q17 20 19.500 17" fill="none" stroke="#3fa4e8" strokeWidth="4" />
        <path d="M4 23 Q-2 18 9 7 Q19 -1 22 2 Q23.500 4 22 7" fill="none" stroke="#f4c430" strokeWidth="1.800" />
      </>
    ),
    gBlue: (
      <path d="M23.500 3.500 Q20 4.500 17 2 Q12 0 8 3 Q1 6 1 13 Q3 22 12 23 Q21 22 21.500 15.500 Q21 11 17 11 Q13 11 12 14 Q15 13.500 15 15.500 Q13 18 10 16 Q7 13 9 9 Q13 6 18 7.500 Q22 7 23.500 3.500z" fill="#199be8" />
    ),
    eGreen: (
      <>
        <circle cx="12" cy="12.500" r="10" fill="#52b81e" stroke="#fff" strokeWidth="1.500" />
        <path d="M7.500 13H16.500Q16 8.500 12 8.500Q7.500 9 7.500 13Q8 17.500 12 17.500Q15 17.500 16 15.500" fill="none" stroke="#fff" strokeWidth="2.200" />
        <path d="M2 20 Q10 3 22 1.500" fill="none" stroke="#52b81e" strokeWidth="1.500" />
      </>
    ),
    app: (
      <>
        <rect width="24" height="24" rx="3" fill="#0a8cf0" />
        <path d="M15.500 8Q15 6 13.300 6Q12 6.300 12 8.500V16Q12 19 14.300 18.600Q15.800 18.200 15.800 16.800M20 11.500V14M20 12.700H7.500Q4.700 12.700 4.700 15Q5 17.300 8 17.200" stroke="#fff" strokeWidth="1.700" fill="none" strokeLinecap="round" />
      </>
    ),
    book: (
      <>
        <rect width="24" height="24" rx="2" fill="#1f7cd6" />
        <path d="M3 9L11 7L12 8L20 7L21 19L12 20L3 19z" fill="#f5f1e6" stroke="#7a99bb" />
        <path d="M12 8V20M5 11.500h5M5 14h5M5 16.500h5" stroke="#8aa" />
        <circle cx="15" cy="7" r="4" fill="#9fd0f8" stroke="#cfe8fb" strokeWidth="1.300" />
        <path d="M17.500 10L21 15" stroke="#e0a13c" strokeWidth="2" />
      </>
    ),
    pdf: (
      <>
        <rect x=".5" y=".5" width="23" height="23" rx="2" fill="#d2701c" stroke="#9a9a9a" />
        <path d="M4.500 18V8H7.500V12.500H4.500M10.500 8V18H13.500V8H10.500M17.500 18V8H21M17.500 12.500H20M10 6 Q12 3 14 6" fill="none" stroke="#f4e4d0" strokeWidth="1.500" />
      </>
    ),
  };
  return (
    <Svg width="24" height="24" viewBox="0 0 24 24" aria-hidden="true">
      {art[kind]}
    </Svg>
  );
}

/* ---------- sections ---------- */

function NavTree() {
  return (
    <TreeBox>
      <ul>
        {groups.map((g) => (
          <React.Fragment key={g.name}>
            <Row>
              <Twist aria-label={g.name}><Chevron open={g.open} /></Twist>
              <Dash />
              <Icon name={g.open ? 'folderOpen' : 'folder'} />
              <Label><Song>{g.name}</Song></Label>
            </Row>
            {(g.items || []).map(([icon, text, sel], i) => (
              <Row key={text}>
                <Trunk />
                <Branch $last={i === g.items!.length - 1} />
                <Icon name={icon} />
                <Label $selected={sel}><Song>{text}</Song></Label>
              </Row>
            ))}
          </React.Fragment>
        ))}
      </ul>
    </TreeBox>
  );
}

function CompTree() {
  const names = Array.from({ length: 11 }, (_, i) => `JLQ-${i + 1}`);
  return (
    <TreeBox $last>
      <ul>
        <Row>
          <Twist aria-label="剪力墙"><Chevron open /></Twist>
          <Dash />
          <Icon name="wall" />
          <Label><Song>剪力墙</Song></Label>
        </Row>
        {names.map((n, i) => (
          <Row key={n}>
            <Branch $ml={31} $w={9} $last={i === 10} />
            <PickRow $on={n === 'JLQ-10'}>
              <Icon name="gear" size={11} />
              <MonoRun>{n}</MonoRun>
            </PickRow>
          </Row>
        ))}
      </ul>
    </TreeBox>
  );
}

function PropTable() {
  return (
    <Table>
      <colgroup>
        <col width="20" />
        <col width="191" />
        <col width="210" />
        <col width="32" />
      </colgroup>
      <thead>
        <tr>
          <th aria-label="序号" />
          <th>属性名称</th>
          <ValueHead>属性值</ValueHead>
          <th>附加</th>
        </tr>
      </thead>
      <tbody>
        {rows.map((r) => (
          <tr key={r.n}>
            <NumCell $on={r.on}><MonoRun>{r.n}</MonoRun></NumCell>
            <NameCell $on={r.on} $c={r.color}>
              <div>
                {r.plus ? (
                  <Plus aria-label={`展开${r.name}`}>
                    <Svg width="8" height="8" viewBox="0 0 8 8" aria-hidden="true"><path d="M0 4H8M4 0V8" stroke="#000" /></Svg>
                  </Plus>
                ) : (
                  <Indent />
                )}
                <Song>{r.name}</Song>
              </div>
            </NameCell>
            <ValCell $on={r.on}><Value text={r.value || ''} /></ValCell>
            <CheckCell>{r.check && <input type="checkbox" aria-label={`${r.name}附加`} />}</CheckCell>
          </tr>
        ))}
      </tbody>
    </Table>
  );
}

function Helper() {
  return (
    <Dialog role="dialog" aria-label="钢筋输入助手">
      <DialogHead>
        钢筋输入助手-墙水平分布钢筋
        <button aria-label="关闭"><Cross /></button>
      </DialogHead>
      <Formula aria-label="钢筋" defaultValue="(2)C8/(2)C10@200" />
      <Cols>
        <ColTitle>1.输入格式</ColTitle>
        <ColTitle $pad>2.输入说明</ColTitle>
        <Well>
          <Formats role="listbox" aria-label="输入格式">
            {formats.map((f, i) => (
              <li key={f} role="option" aria-selected={i === 2}>{f}</li>
            ))}
          </Formats>
          <HScroll aria-hidden="true">
            <Svg width="8" height="8" viewBox="0 0 8 8"><path d="M6 0L2 4L6 8" fill="none" stroke="#505050" strokeWidth="1.800" /></Svg>
            <Thumb />
            <Svg width="8" height="8" viewBox="0 0 8 8"><path d="M2 0L6 4L2 8" fill="none" stroke="#505050" strokeWidth="1.800" /></Svg>
          </HScroll>
        </Well>
        <Well>
          <Hint>同排存在隔一布一的钢筋且间距相同时，钢筋信息用"/"隔开。</Hint>
        </Well>
      </Cols>
      <Actions>
        <DialogButton $main>确定</DialogButton>
        <DialogButton>取消</DialogButton>
      </Actions>
    </Dialog>
  );
}

function ImeBar() {
  return (
    <Ime>
      <ImeLogo width="28" height="28" viewBox="0 0 28 28" aria-hidden="true">
        <path d="M2 5 Q1 3 4 2.500 L21 .5 Q24 .5 24.500 3 L27 21 Q27 24 24.500 24.500 L8 27 Q5.500 27 5 25z" fill="#f04e23" />
        <path d="M21 7 Q10 4 8 9 Q8 12.500 15 13 Q21.500 13.500 21 17.500 Q19.500 22 8.500 20.500" stroke="#fff" strokeWidth="3.500" fill="none" />
      </ImeLogo>
      英
      <Svg width="16" height="16" viewBox="0 0 16 16"><circle cx="6" cy="4.500" r="1.800" fill="#1874cc" /><path d="M10 8.500Q13.500 9 11 13" stroke="#1874cc" strokeWidth="2" fill="none" /></Svg>
      <Svg width="16" height="16" viewBox="0 0 16 16"><g fill="none" stroke="#1874cc" strokeWidth="1.500"><circle cx="8" cy="8" r="7" /><path d="M4.500 9Q8 14 11.500 9" /><path d="M5.500 4.500V7M10.500 4.500V7" strokeWidth="2" /></g></Svg>
      <Svg width="14" height="16" viewBox="0 0 14 16"><rect x="4.500" y="1" width="5" height="9" rx="2.500" fill="#1874cc" /><path d="M1.500 7Q2 12 7 12Q12 12 12.500 7M7 12V15M4 15H10" stroke="#1874cc" strokeWidth="1.500" fill="none" /></Svg>
      <Svg width="17" height="16" viewBox="0 0 17 16"><rect x=".5" y="2" width="16" height="12" rx="1" fill="#1874cc" /><path d="M2.500 5H15M2.500 8H15" stroke="#fff" strokeWidth="1.500" strokeDasharray="2 1" /><path d="M4 11.500H13" stroke="#fff" strokeWidth="1.500" /></Svg>
      <Svg width="17" height="16" viewBox="0 0 17 16"><circle cx="6" cy="4" r="3" fill="#a9b4cc" /><path d="M0 14Q0 8 6 8Q9 8 10 9V14z" fill="#a9b4cc" /><rect x="6" y="8.500" width="10.500" height="7" fill="#fff" stroke="#a9b4cc" /><path d="M8 10.500H10.500V12.500H8V14H11M12.500 10.500H14.500V14H12.500z" stroke="#a9b4cc" fill="none" /></Svg>
      <Svg width="15" height="16" viewBox="0 0 16 16"><path d="M5 1.500Q8 4 11 1.500L15.500 4L14 8L12 7V15H4V7L2 8L.5 4z" fill="#1874cc" /></Svg>
      <Svg width="16" height="16" viewBox="0 0 16 16"><path d="M3 14L10 7" stroke="#1874cc" strokeWidth="3.500" strokeLinecap="round" /><path d="M12 1Q7.500 2 8 6Q10.500 10 15.500 6L15 4L12.500 6L10.500 4.500z" fill="#1874cc" /></Svg>
    </Ime>
  );
}

export default function App() {
  return (
    <Page>
      <Global />
      <Gradients />
      <TitleBar>
        <Icon name="app" size={17} />
        <TitleText>
          {splitRuns(title).map((r, i) => (isLatin(r) ? <TitleLatin key={i}>{r}</TitleLatin> : <span key={i}>{r}</span>))}
        </TitleText>
        <WinButtons>
          <button aria-label="最小化"><Svg width="11" height="11" viewBox="0 0 11 11"><path d="M0 6.500H10" stroke="#888" /></Svg></button>
          <button aria-label="还原"><Svg width="11" height="11" viewBox="0 0 11 11"><path d="M.5 3H8V10.500H.5z M3 3V.5H10.500V8H8" fill="none" stroke="#888" /></Svg></button>
          <button aria-label="关闭"><Cross color="#888" /></button>
        </WinButtons>
      </TitleBar>

      <Bar>
        <MenuArea>
          <Menu>
            {menus.map((m) => <Tool key={m}>{m}</Tool>)}
          </Menu>
          <T icon="change" text="新建变更" arrow={2} />
          <T icon="mascot" text="广小二" />
        </MenuArea>
        <Strip $w={187} $pad={28}><Promo href="#help">为什么筏板XY方向布置..</Promo></Strip>
        <Strip $grow>
          <T icon="user" text="13907298339" arrow={4} />
          <Tool>造价豆:0</Tool>
          <Icon name="bell" />
          <Push />
          <More aria-label="更多">»</More>
        </Strip>
      </Bar>

      <Bar>
        <Strip $w={151} $gap={6}>
          <Tool aria-label="新建"><Icon name="newDoc" /></Tool>
          <Tool aria-label="打开"><Icon name="open" /><Arrow gap={2} /></Tool>
          <Tool aria-label="保存"><Icon name="save" /></Tool>
          <Sep />
          <Tool aria-label="撤销"><Icon name="undo" /><Arrow gap={2} /></Tool>
          <Push />
          <More aria-label="更多">»</More>
        </Strip>
        <Strip $w={548}>
          <T icon="paint" text="绘图" />
          <T icon="sigma" text="汇总计算" />
          <T icon="cloud" text="云检查" />
          <T icon="slabTop" text="平齐板顶" dim />
          <T icon="binoculars" text="查找图元" dim />
          <T icon="glasses" text="查看钢筋量" dim />
          <T icon="batch" text="批量选择" dim />
          <Push />
          <More aria-label="更多">»</More>
        </Strip>
        <Strip $grow $pad={2} $gap={6}>
          <ViewPick>
            <Icon name="rect2d" />
            <Select aria-label="视图模式" defaultValue="二维"><option>二维</option></Select>
            <Arrow color="#777" />
          </ViewPick>
          <T icon="cube" text="俯视" dim arrow={2} gap={3} />
          <T icon="planet" text="动态观察" dim />
          <T icon="local3d" text="局部三维" dim />
          <Sep />
          <T icon="zoomAll" text="全屏" dim />
          <T icon="zoomIn" text="缩放" dim arrow={3} />
          <T icon="pan" text="平移" dim arrow={2} />
          <T icon="rotate" text="屏幕旋转" dim arrow={-2} />
          <Sep />
          <T icon="floors" text="选择楼层" dim />
          <Push />
          <More aria-label="更多">»</More>
        </Strip>
      </Bar>

      <Work>
        <Side>
          <SideHead>
            <span>模块导航栏</span>
            <button aria-label="固定"><Svg width="9" height="10" viewBox="0 0 9 10"><path d="M2.500 0V5.500M6.500 0V5.500M2 .5H7M0 5.500H9M4.500 6V10M5.500 0V5" stroke="#000" /></Svg></button>
            <button aria-label="关闭"><Cross size={9} /></button>
          </SideHead>
          <Section>工程设置</Section>
          <Section>绘图输入</Section>
          <SideTools>
            <button aria-label="全部展开"><Icon name="expandAll" /></button>
            <button aria-label="全部折叠"><Icon name="collapseAll" /></button>
          </SideTools>
          <NavTree />
          <Section>单构件输入</Section>
          <Section>报表预览</Section>
        </Side>

        <Main>
          <Strip $gap={6}>
            <T icon="newComp" text="新建" gap={3} arrow={0} />
            <T icon="del" text="删除" />
            <T icon="copy" text="复制" />
            <T icon="rename" text="重命名" />
            <Sep />
            <FloorPick>
              楼层
              <FloorBox>
                <Select defaultValue="首层"><option>首层</option></Select>
                <Arrow />
              </FloorBox>
            </FloorPick>
            <Sep />
            <T icon="sort" text="排序" arrow={-1} />
            <T icon="filter" text="过滤" arrow={-1} />
            <Sep />
            <T icon="copyLevel" text="从其他楼层复制构件" />
            <T icon="copyLevel" text="复制构件到其他楼层" />
            <Sep />
            <Tool>查找<Arrow /></Tool>
            <Sep />
            <T icon="up" text="上移" />
            <T icon="down" text="下移" />
          </Strip>
          <Panels>
            <Comps>
              <SearchRow>
                <SearchInput placeholder="搜索构件..." aria-label="搜索构件" />
                <button type="button" aria-label="搜索"><Icon name="search" /></button>
              </SearchRow>
              <CompTree />
            </Comps>
            <Props>
              <Tabs>
                <Tab>属性编辑</Tab>
                <TabRest />
              </Tabs>
              <Sheet>
                <SheetInner><PropTable /></SheetInner>
              </Sheet>
            </Props>
          </Panels>
        </Main>
      </Work>

      <Status>
        <Cell $w={148} />
        <Cell $w={78}><Song>层高:4.5m</Song></Cell>
        <Cell $w={98}><Song>底标高:-0.03m</Song></Cell>
        <Cell $w={48}><Song>0</Song></Cell>
        <Cell><Song>名称在当前层当前构件类型下不允许重名</Song></Cell>
        <Cell $w={70}><Song>722.5 FPS</Song></Cell>
      </Status>

      <Taskbar>
        <StartCell $w={48} aria-label="开始">
          <Svg width="16" height="16" viewBox="0 0 16 16"><path d="M0 2.200L6.500 1.300V7.600H0z M7.500 1.100L16 0V7.600H7.500z M0 8.500H6.500V14.800L0 13.900z M7.500 8.500H16V16L7.500 14.900z" fill="#fff" /></Svg>
        </StartCell>
        <TaskSearch>
          <Svg width="22" height="22" viewBox="0 0 22 22"><circle cx="11" cy="11" r="9" fill="none" stroke="#fff" strokeWidth="2.500" /></Svg>
          <input placeholder="在这里输入你要搜索的内容" aria-label="搜索" />
          <Svg width="12" height="18" viewBox="0 0 12 18"><path d="M3.500 1.500H8.500V11.500H3.500z M1 9V13.500H11V9 M6 13.500V16.500M3 16.500H9" fill="none" stroke="#999" /></Svg>
        </TaskSearch>
        <TaskApps>
          <TaskCell $w={48} aria-label="任务视图"><TaskIcon kind="view" /></TaskCell>
          <TaskCell $w={51} aria-label="应用"><TaskIcon kind="fan" /></TaskCell>
          <TaskCell $w={51} aria-label="浏览器"><TaskIcon kind="e1" /></TaskCell>
          <TaskCell $w={51} aria-label="助手"><TaskIcon kind="swirl" /></TaskCell>
          <TaskCell $w={48} aria-label="Edge"><TaskIcon kind="edge" /></TaskCell>
          <TaskCell $w={42} $run aria-label="文件资源管理器"><TaskIcon kind="explorer" /></TaskCell>
          <TaskCell $w={42} aria-label="Internet Explorer"><TaskIcon kind="ie" /></TaskCell>
          <TaskCell $w={42} $run aria-label="浏览器"><TaskIcon kind="gBlue" /></TaskCell>
          <TaskCell $w={42} $run aria-label="浏览器"><TaskIcon kind="eGreen" /></TaskCell>
          <TaskCell $w={42} $on aria-label="广联达"><TaskIcon kind="app" /></TaskCell>
          <TaskCell $w={42} $run aria-label="阅读"><TaskIcon kind="book" /></TaskCell>
          <TaskCell $w={42} $run aria-label="PDF"><TaskIcon kind="pdf" /></TaskCell>
        </TaskApps>
        <Tray>
          <TrayText $w={24}>链接</TrayText>
          <TrayText $w={66}>27%<br />CPU使用</TrayText>
          <Svg width="14" height="12" viewBox="0 0 14 12"><path d="M1.500 9L7 3.500L12.500 9" fill="none" stroke="#fff" strokeWidth="1.300" /></Svg>
          <Svg width="16" height="14" viewBox="0 0 16 14"><path d="M6 3.500H14.500V10.500H5M15.500 5.500V8.500M2.500 0V3M5.500 0V3M1.500 3H6.500V6H1.500zM4 6V9.500" fill="none" stroke="#fff" /><path d="M7 5H11V9H7z" fill="#fff" /></Svg>
          <Svg width="14" height="14" viewBox="0 0 14 14"><path d="M1 9Q4 4 12.500 1.500M4 12Q5 6 13 4.500M6.500 13Q8 9 13 8M9.500 13.500Q10 12 13 11" fill="none" stroke="#ddd" /></Svg>
          <Svg width="16" height="14" viewBox="0 0 16 14"><path d="M.5 5H3L6.500 2V12L3 9H.5z M9 5Q10.500 7 9 9M11 3.500Q13.500 7 11 10.500M13 2Q16.500 7 13 12" fill="none" stroke="#fff" /></Svg>
          <Svg width="23" height="13" viewBox="0 0 23 13"><rect x=".5" y=".5" width="22" height="12" fill="none" stroke="#fff" /><path d="M3 3.500H20M3 6.500H20" stroke="#fff" strokeDasharray="2 1" /><path d="M6 9.500H17" stroke="#fff" /></Svg>
          <TrayText $w={14} $big>中</TrayText>
          <SLogo size={16} />
          <TrayText $w={64}>19:34<br />2018/1/3</TrayText>
          <Notice>
            <Svg width="26" height="26" viewBox="0 0 26 26">
              <path d="M1 2H17V14H8L5 17V14H1z" fill="#fff" />
              <path d="M3 5H15M3 8H15M3 11H11" stroke="#000" />
              <circle cx="16.500" cy="17" r="8" fill="#333" stroke="#777" />
              <text x="16.500" y="21" textAnchor="middle" fill="#fff" fontSize="12">1</text>
            </Svg>
          </Notice>
        </Tray>
      </Taskbar>

      <Helper />
      <Badge>68</Badge>
      <ImeBar />
      <Marks width="1366" height="320" viewBox="0 0 1366 320" aria-hidden="true">
        <g fill="none" stroke="#ff0000" strokeWidth="3">
          <ellipse cx="637" cy="245" rx="122" ry="54" />
          <ellipse cx="1133" cy="226" rx="159" ry="57" />
        </g>
      </Marks>
    </Page>
  );
}
